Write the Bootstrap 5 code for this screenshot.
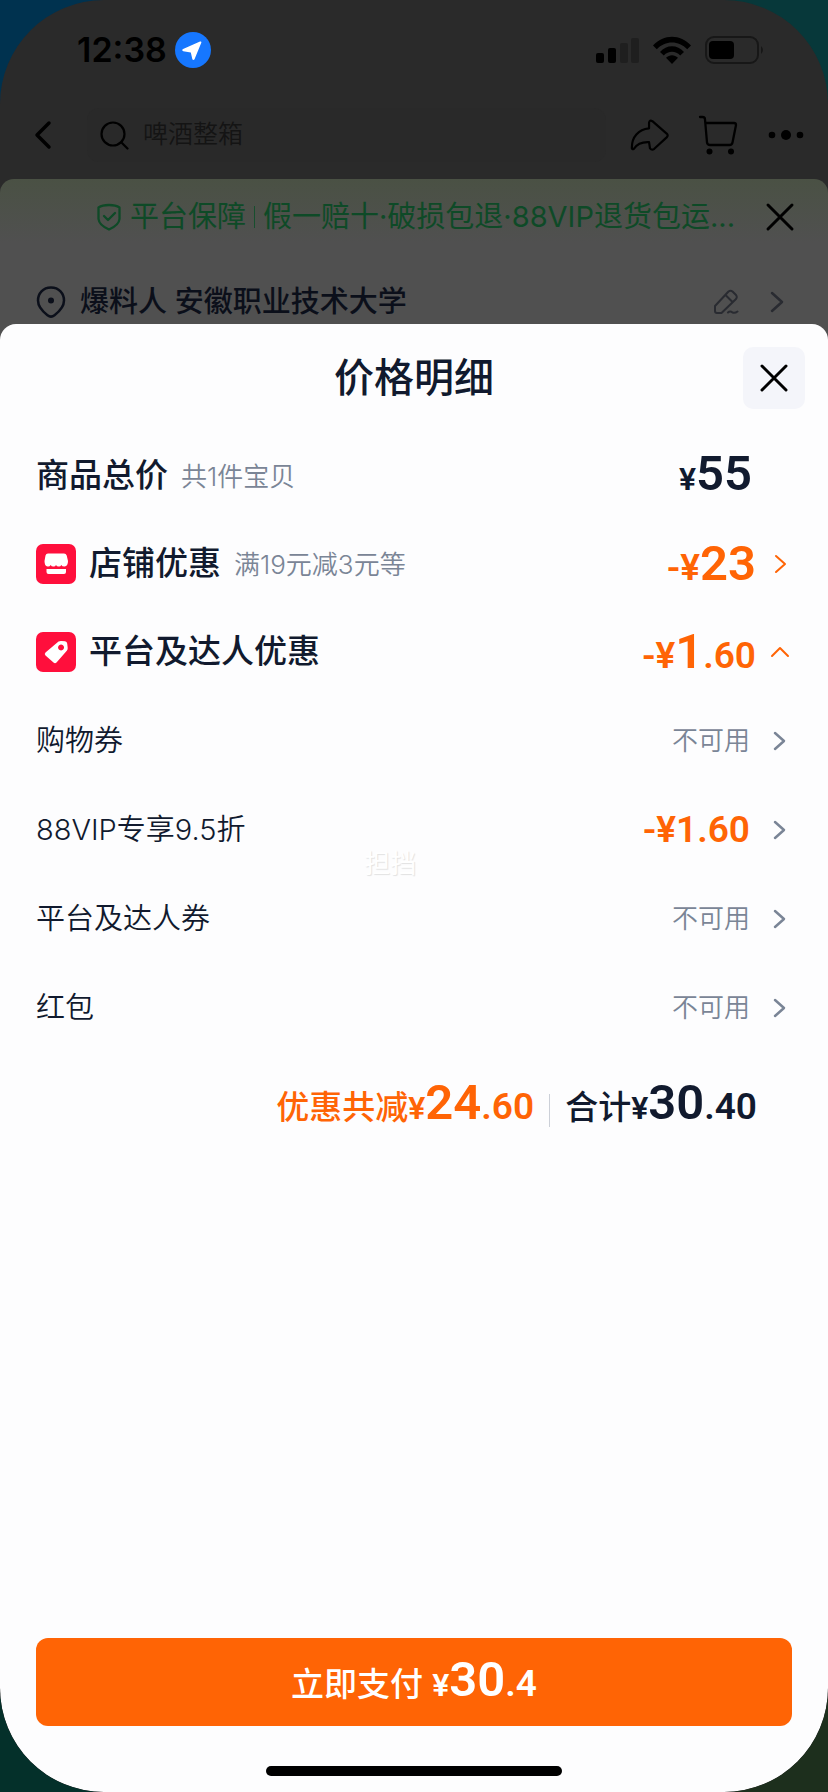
<!DOCTYPE html>
<html lang="zh-CN">
<head>
<meta charset="utf-8">
<meta name="viewport" content="width=device-width, initial-scale=1">
<title>价格明细</title>
<link href="https://cdn.jsdelivr.net/npm/bootstrap@5.3.0/dist/css/bootstrap.min.css" rel="stylesheet">
<style>
:root { --ink: #111a2e; --muted: #7a8596; --orange: #ff6405; }
body {
  font-family: Inter, "Noto Sans CJK SC", sans-serif;
  color: var(--ink);
  background:
    linear-gradient(90deg, #00324f 30%, #07383a 70%) top / 100% 50% no-repeat,
    linear-gradient(90deg, #04302a 30%, #1d2f1d 70%) bottom / 100% 50% no-repeat;
}
button { border: 0; background: none; padding: 0; color: inherit; }
svg { display: block; flex: none; fill: none; stroke: currentColor; stroke-linecap: round; stroke-linejoin: round; }
svg.solid { fill: currentColor; stroke: none; }
.screen { background: #2a2a2a; border-radius: 104px; }
.status { height: 90px; padding: 10px 62px 0 77px; color: #000; }
.clock { font-size: 34px; font-weight: 600; line-height: 40px; }
.signal { gap: 14px; }
.topbar { height: 89px; padding: 0 22px 0 30px; color: #000; }
.searchbox { height: 54px; margin: 0 24px 0 33px; background: #292929; border-radius: 12px; padding-left: 13px; gap: 12px; }
.searchbox input { border: 0; background: none; outline: 0; font-size: 25px; font-weight: 350; color: #111; min-width: 0; }
.searchbox input::placeholder { color: #141414; opacity: 1; }
.tools { gap: 28px; }
.panel { background: linear-gradient(#4a5144, #505050 64px); border-radius: 14px 14px 104px 104px; }
.promise { height: 75px; padding: 0 33px 0 96px; color: #0e4a27; font-size: 29px; font-weight: 400; }
.promise .bar { width: 1px; height: 22px; background: #174f2e; }
.address { height: 96px; padding: 0 39px 0 36px; color: #0b0f1a; font-size: 29px; font-weight: 500; }
.address .who { margin-left: 14px; }
.address .acts { gap: 26px; color: #292b31; }
.sheet { margin-top: -26px; background: #fdfdfe; border-radius: 16px 16px 104px 104px; }
.sheet-head { height: 108px; }
.sheet-head h1 { font-size: 40px; font-weight: 500; }
.close-btn { width: 62px; height: 62px; right: 23px; top: 23px; background: #f4f5fa; border-radius: 10px; color: #000; }
.line { width: 100%; height: 88px; padding: 0 36px; text-align: left; }
.line.sub { height: 89px; }
.name { font-size: 33px; font-weight: 500; }
.note { font-size: 26px; font-weight: 350; color: var(--muted); }
.item { font-size: 29px; font-weight: 350; }
.tile { width: 40px; height: 40px; }
.price { font-family: Roboto, "Noto Sans CJK SC", sans-serif; font-weight: 600; font-size: 37px; line-height: 50px; white-space: nowrap; }
.price .yen { font-size: 32px; }
.price .big { font-size: 49px; }
.price .txt { font-size: 33px; font-weight: 500; }
.orange { color: var(--orange); }
.gap-near { gap: 12px; }
.gap-near .price { padding-top: 4px; }
.gap-far { gap: 18px; }
.gap-name { gap: 13px; }
.no-arrow { padding-right: 76px; }
.total { padding: 26px 71px 0 36px; }
.total .bar { width: 1px; height: 33px; background: #ccd0d8; margin: 10px 15px 0; }
.watermark { left: 44%; top: 520px; font-size: 26px; color: #fff; text-shadow: 1px 1px 1px #e2e2e2; }
.foot { padding: 24px 36px 0; }
.pay { height: 88px; background: var(--orange); border-radius: 12px; color: #fff; }
.home { width: 296px; height: 10px; margin: 40px auto 16px; background: #000; }
</style>
</head>
<body>
<div class="screen min-vh-100 d-flex flex-column overflow-hidden">
  <header>
    <div class="status d-flex align-items-center">
      <span class="clock">12:38</span>
      <svg class="ms-2 solid" width="36" height="36" viewBox="0 0 36 36"><circle cx="18" cy="18" r="18" fill="#1677ff"/><path d="M25 9.500c1-.4 1.700.3 1.300 1.300L19.500 27.300c-.5 1.100-1.900 1-2.200-.2L15.800 20.500 8.300 19.200c-1.300-.3-1.400-1.700-.2-2.200Z" fill="#fff"/></svg>
      <div class="signal ms-auto d-flex align-items-center">
        <svg class="solid" width="43" height="28" viewBox="0 0 43 28"><rect x="0" y="17" width="8" height="10" rx="2"/><rect x="12" y="12" width="8" height="15" rx="2"/><rect x="24" y="7" width="8" height="20" rx="2" fill="#1f1f1f"/><rect x="35" y="2" width="8" height="25" rx="2" fill="#1f1f1f"/></svg>
        <svg class="solid" width="38" height="28" viewBox="0 0 38 28"><path d="M0 9.500C10.500-2.300 27.500-2.300 38 9.500L34.200 13.300C25.800 4.300 12.200 4.300 3.800 13.300ZM7 16C13.500 8.400 24.500 8.400 31 16L27.200 19.600C22.700 14.600 15.300 14.600 10.800 19.600ZM13 21.800C16.500 18.400 21.500 18.400 25 21.800L19 28Z"/></svg>
        <svg width="61" height="28" viewBox="0 0 61 28"><rect x="1" y="1" width="52" height="26" rx="8" stroke="#171717" stroke-width="2"/><rect x="4" y="5" width="25" height="18" rx="4" fill="#000" stroke="none"/><path d="M56 10q4 4 0 8Z" fill="#171717" stroke="none"/></svg>
      </div>
    </div>
    <div class="topbar d-flex align-items-center">
      <button aria-label="返回"><svg width="24" height="30" viewBox="0 0 24 30" stroke-width="3.500"><path d="M19 3 7 15 19 27"/></svg></button>
      <label class="searchbox d-flex align-items-center flex-grow-1">
        <svg width="29" height="30" viewBox="0 0 29 30" stroke-width="2.200"><circle cx="13" cy="14" r="11.500"/><path d="m21.500 22.500 6 6"/></svg>
        <input class="flex-grow-1" type="search" placeholder="啤酒整箱" aria-label="搜索">
      </label>
      <div class="tools d-flex align-items-center">
        <button aria-label="分享"><svg width="40" height="34" viewBox="0 0 42 34" stroke-width="2.300"><path d="M20 10V4q.6-3 3.500-1.500L38.500 15.500q2 2 0 4L25.500 31.500Q23 33.500 21 31L20 24.500C11 24 7 27 4 31.500Q2.500 32.500 2 31C1.500 19 9 11 20 10Z"/></svg></button>
        <button aria-label="购物车"><svg width="40" height="40" viewBox="0 0 40 40" stroke-width="2.300"><path d="M2 2H4.500Q7 2 7 4.500L9 27.500Q9.500 30 12 30H31.500Q34 30 34.500 27.500L38 10Q38 8 36 8H8"/><circle cx="11.500" cy="36.500" r="3" fill="#000" stroke="none"/><circle cx="33" cy="36.500" r="3" fill="#000" stroke="none"/></svg></button>
        <button aria-label="更多"><svg class="solid" width="40" height="12" viewBox="0 0 40 12"><circle cx="6" cy="6" r="3.300"/><circle cx="20" cy="6" r="5"/><circle cx="34" cy="6" r="3.300"/></svg></button>
      </div>
    </div>
  </header>

  <main class="panel flex-grow-1 d-flex flex-column">
    <div class="promise d-flex align-items-center">
      <svg width="26" height="28" viewBox="0 0 26 28" stroke-width="2.300"><path d="M13 2C8 2 4 3.500 2.500 4.500V16C3 21.500 8.500 24.500 13 26.500 17.500 24.500 23 21.500 23.500 16V4.500C22 3.500 18 2 13 2ZM8 13l4 4 7-7"/></svg>
      <span class="ms-2 text-nowrap">平台保障</span>
      <span class="bar mx-2 flex-shrink-0"></span>
      <span class="text-nowrap">假一赔十·破损包退·88VIP退货包运...</span>
      <button class="ms-auto text-black" aria-label="关闭"><svg width="30" height="30" viewBox="0 0 30 30" stroke-width="3"><path d="m3 3 24 24M27 3 3 27"/></svg></button>
    </div>
    <div class="address d-flex align-items-center">
      <svg width="30" height="32" viewBox="0 0 30 32" stroke-width="2.500"><path d="M15 1.500C7 1.500 2 7.500 2 14.500 2 21 6 25 11.500 29.200Q15 32 18.500 29.200C24 25 28 21 28 14.500 28 7.500 23 1.500 15 1.500Z"/><circle cx="15" cy="14.500" r="3" fill="currentColor" stroke="none"/></svg>
      <span class="who text-nowrap">爆料人 安徽职业技术大学</span>
      <div class="acts ms-auto d-flex align-items-center">
        <button aria-label="编辑"><svg width="26" height="26" viewBox="0 0 26 26" stroke-width="2"><path d="M2 17 15.500 2.500Q17.500 1 19.500 2.500L23 6Q24.500 8 23 10L8.500 24H4Q2 24 2 22ZM12.500 6 19.500 13M15 23.500q2-2 4.500 0 2.500 1 5-1"/></svg></button>
        <button aria-label="修改地址"><svg width="24" height="24" viewBox="0 0 24 24" stroke-width="2.500"><path d="m7 3 10 9-10 9"/></svg></button>
      </div>
    </div>

    <section class="sheet position-relative flex-grow-1 d-flex flex-column" aria-labelledby="sheet-title">
      <div class="sheet-head d-flex align-items-center justify-content-center">
        <h1 id="sheet-title" class="m-0">价格明细</h1>
        <button class="close-btn position-absolute d-flex align-items-center justify-content-center" aria-label="关闭价格明细"><svg width="30" height="30" viewBox="0 0 30 30" stroke-width="3"><path d="m3 3 24 24M27 3 3 27"/></svg></button>
      </div>

      <div class="line no-arrow d-flex align-items-center gap-name">
        <span class="name">商品总价</span><span class="note">共1件宝贝</span>
        <span class="price ms-auto"><span class="yen">¥</span><span class="big">55</span></span>
      </div>
      <button class="line d-flex align-items-center gap-name">
        <svg class="tile solid" viewBox="0 0 40 40"><rect width="40" height="40" rx="7" fill="#ff0f3c"/><path d="M12 9.500H28Q30 9.500 30.700 11.500L32 17Q32 22 28.500 22.500 26 22.500 25.300 21 24.300 23 22.500 22.500 20.800 22.500 20 21 19 23 17.200 22.500 15.500 22.500 14.700 21 13.500 23 11.500 22.500 8.500 22 8.500 17L9.500 11.500Q10 9.500 12 9.500ZM10.500 25H30V28Q30 30 28 30H12.500Q10.500 30 10.500 28Z" fill="#fff"/></svg>
        <span class="name">店铺优惠</span><span class="note">满19元减3元等</span>
        <span class="ms-auto d-flex align-items-center gap-near orange"><span class="price">-¥<span class="big">23</span></span>
        <svg width="24" height="24" viewBox="0 0 24 24" stroke-width="2"><path d="m8 4 9 8-9 8"/></svg></span>
      </button>
      <button class="line d-flex align-items-center gap-name" aria-expanded="true">
        <svg class="tile solid" viewBox="0 0 40 40"><rect width="40" height="40" rx="7" fill="#ff0f3c"/><path fill-rule="evenodd" d="M22.500 9.500Q24 8.800 25.500 9L29 9.300Q31 9.500 31.200 11.500L31.700 16Q31.800 17.500 30.800 18.800L20.500 30.500Q19 32 17.500 30.500L9.500 23.500Q8 22 9.500 20.500ZM25 12.500a3 3 0 1 0 .1 0Z" fill="#fff"/></svg>
        <span class="name">平台及达人优惠</span>
        <span class="ms-auto d-flex align-items-center gap-near orange"><span class="price">-¥<span class="big">1</span>.60</span>
        <svg width="24" height="24" viewBox="0 0 24 24" stroke-width="2"><path d="m4 16 8-8 8 8"/></svg></span>
      </button>
      <button class="line sub d-flex align-items-center justify-content-between">
        <span class="item">购物券</span>
        <span class="d-flex align-items-center gap-far note">不可用<svg width="24" height="24" viewBox="0 0 24 24" stroke-width="2.500"><path d="m7 4 9 8-9 8"/></svg></span>
      </button>
      <button class="line sub d-flex align-items-center justify-content-between">
        <span class="item">88VIP专享9.5折</span>
        <span class="d-flex align-items-center gap-far note"><span class="price orange">-¥1.60</span><svg width="24" height="24" viewBox="0 0 24 24" stroke-width="2.500"><path d="m7 4 9 8-9 8"/></svg></span>
      </button>
      <button class="line sub d-flex align-items-center justify-content-between">
        <span class="item">平台及达人券</span>
        <span class="d-flex align-items-center gap-far note">不可用<svg width="24" height="24" viewBox="0 0 24 24" stroke-width="2.500"><path d="m7 4 9 8-9 8"/></svg></span>
      </button>
      <button class="line sub d-flex align-items-center justify-content-between">
        <span class="item">红包</span>
        <span class="d-flex align-items-center gap-far note">不可用<svg width="24" height="24" viewBox="0 0 24 24" stroke-width="2.500"><path d="m7 4 9 8-9 8"/></svg></span>
      </button>
      <div class="total d-flex align-items-center justify-content-end">
        <span class="price orange"><span class="txt">优惠共减</span><span class="yen">¥</span><span class="big">24</span>.60</span>
        <span class="bar"></span>
        <span class="price"><span class="txt">合计</span><span class="yen">¥</span><span class="big">30</span>.40</span>
      </div>
      <span class="watermark position-absolute pe-none">担挡</span>

      <div class="foot mt-auto">
        <button class="pay w-100 d-flex align-items-center justify-content-center"><span class="price"><span class="txt">立即支付</span> <span class="yen">¥</span><span class="big">30</span>.4</span></button>
      </div>
      <div class="home rounded-pill"></div>
    </section>
  </main>
</div>
<script src="https://cdn.jsdelivr.net/npm/bootstrap@5.3.0/dist/js/bootstrap.bundle.min.js"></script>
</body>
</html>
